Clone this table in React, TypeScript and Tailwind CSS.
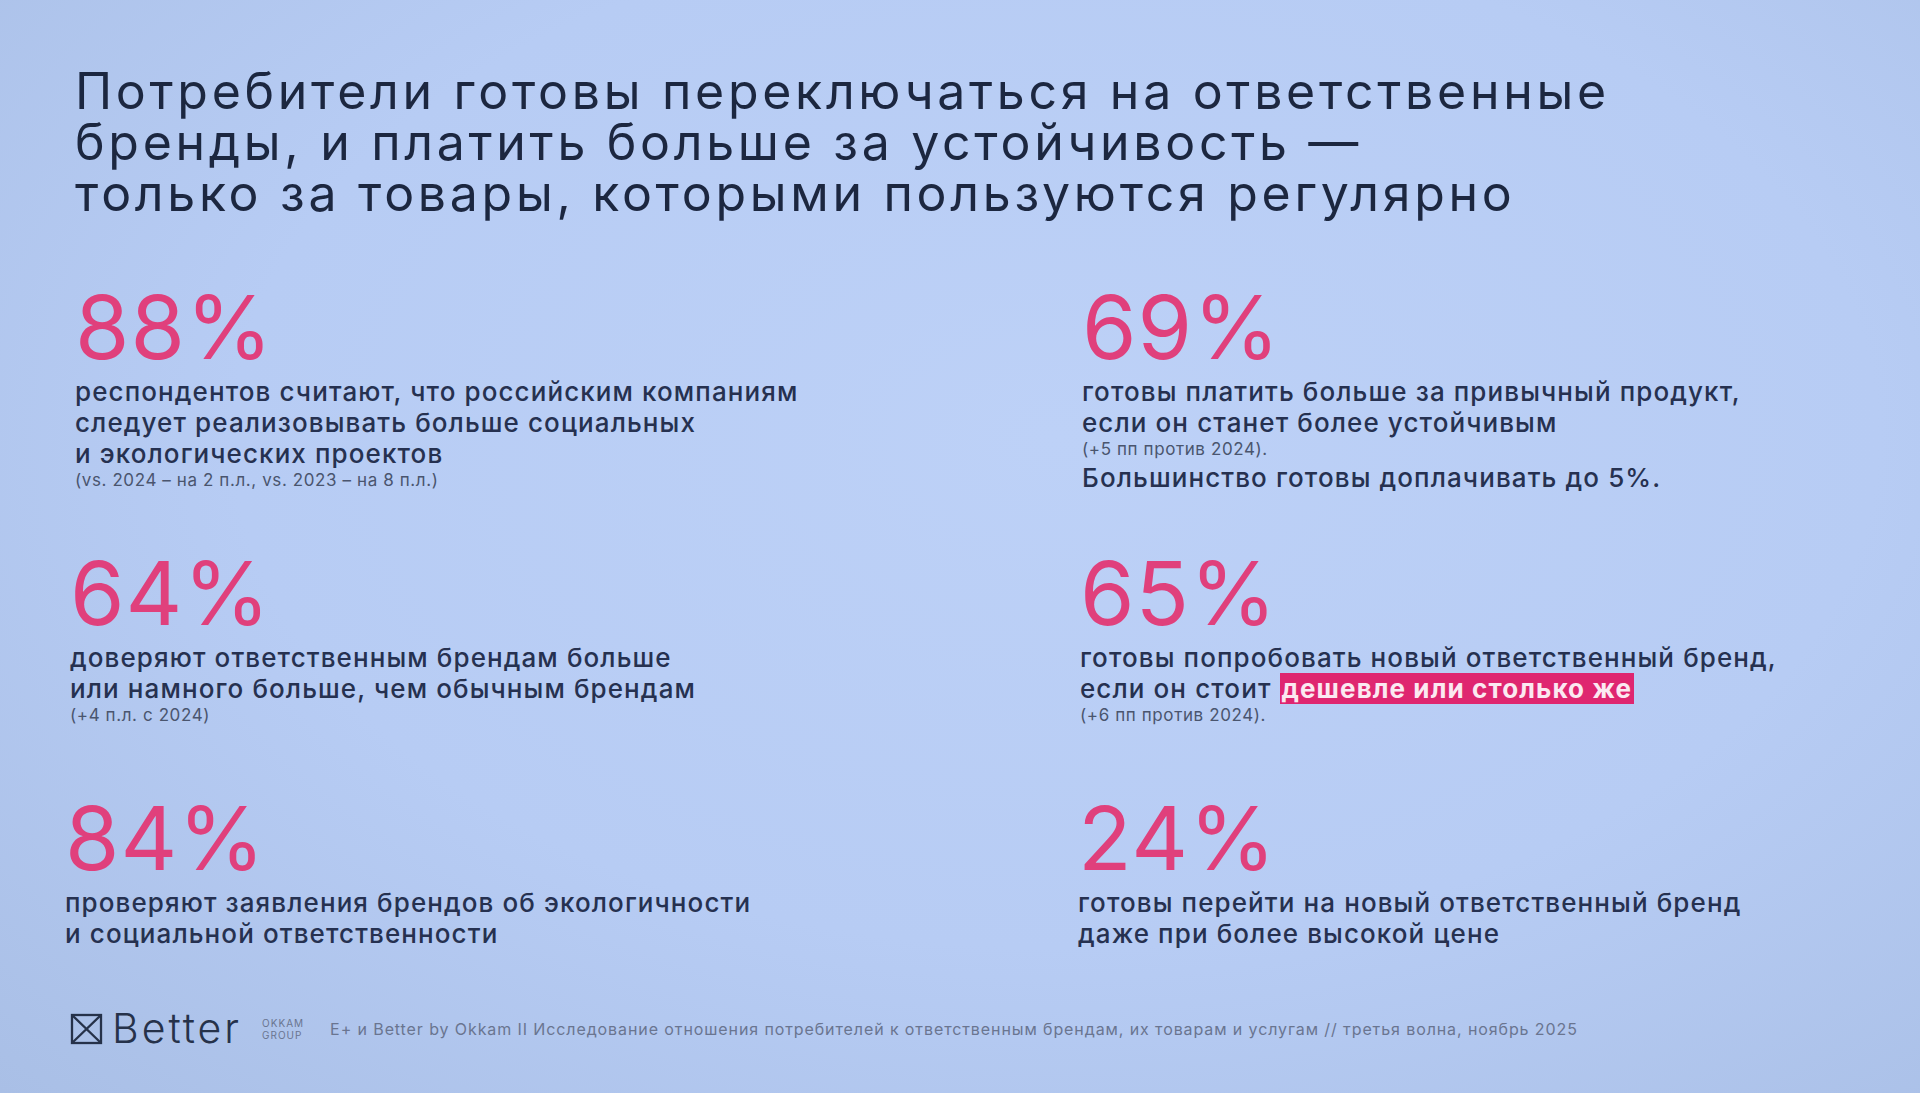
const font = { fontFamily: 'Inter, "Noto Sans", sans-serif' };

type Stat = {
  value: string;
  lines: React.ReactNode[];
  note?: string;
  extra?: string;
  shift: string;
};

type Row = { mt: string; items: [Stat, Stat] };

const rows: Row[] = [
  {
    mt: 'mt-[64px]',
    items: [
      {
        value: '88%',
        lines: [
          'респондентов считают, что российским компаниям',
          'следует реализовывать больше социальных',
          'и экологических проектов',
        ],
        note: '(vs. 2024 – на 2 п.л., vs. 2023 – на 8 п.л.)',
        shift: 'ml-[0px]',
      },
      {
        value: '69%',
        lines: ['готовы платить больше за привычный продукт,', 'если он станет более устойчивым'],
        note: '(+5 пп против 2024).',
        extra: 'Большинство готовы доплачивать до 5%.',
        shift: 'ml-[0px]',
      },
    ],
  },
  {
    mt: 'mt-[56px]',
    items: [
      {
        value: '64%',
        lines: ['доверяют ответственным брендам больше', 'или намного больше, чем обычным брендам'],
        note: '(+4 п.л. с 2024)',
        shift: '-ml-[5px]',
      },
      {
        value: '65%',
        lines: [
          'готовы попробовать новый ответственный бренд,',
          <>
            если он стоит{' '}
            <span className="bg-[#df2670] px-[2px] font-bold text-[#fbe9f1]">дешевле или столько же</span>
          </>,
        ],
        note: '(+6 пп против 2024).',
        shift: '-ml-[2px]',
      },
    ],
  },
  {
    mt: 'mt-[68px]',
    items: [
      {
        value: '84%',
        lines: ['проверяют заявления брендов об экологичности', 'и социальной ответственности'],
        shift: '-ml-[10px]',
      },
      {
        value: '24%',
        lines: ['готовы перейти на новый ответственный бренд', 'даже при более высокой цене'],
        shift: '-ml-[4px]',
      },
    ],
  },
];

function StatBlock({ s }: { s: Stat }) {
  return (
    <div className={`flex flex-col ${s.shift}`}>
      <div className="text-[88px] leading-none font-normal tracking-[1px] text-[#e0407c]">{s.value}</div>
      <div className="mt-[5px] text-[26px] leading-[31px] font-medium tracking-[1.1px] text-[#263150]">
        {s.lines.map((l, i) => (
          <div key={i}>{l}</div>
        ))}
      </div>
      {s.note && (
        <div className="text-[17px] leading-[22px] tracking-[0.6px] text-[#4a556e]">{s.note}</div>
      )}
      {s.extra && (
        <div className="mt-[2px] text-[26px] leading-[31px] font-medium tracking-[1.1px] text-[#263150]">
          {s.extra}
        </div>
      )}
    </div>
  );
}

function BetterLogo() {
  return (
    <div className="flex items-center gap-[9px] text-[#26324a]">
      <svg width="33" height="32" viewBox="0 0 33 32" fill="none" stroke="currentColor" strokeWidth="2.3">
        <rect x="2" y="2" width="29" height="28" />
        <path d="M2 2 L31 30 M31 2 L2 30" />
      </svg>
      <span className="text-[41px] leading-none font-light tracking-[3px]">Better</span>
    </div>
  );
}

export default function App() {
  return (
    <div
      style={font}
      className="relative h-[1093px] w-full overflow-hidden bg-[radial-gradient(ellipse_at_55%_40%,#bdd1f7_0%,#b7ccf4_55%,#a9bfe6_100%)]"
    >
      <div className="flex h-full flex-col pl-[75px] pr-[40px]">
        <h1 className="mt-[66px] text-[50px] leading-[51px] font-normal tracking-[3.7px] whitespace-nowrap text-[#1c2740]">
          Потребители готовы переключаться на ответственные
          <br />
          бренды, и платить больше за устойчивость —
          <br />
          только за товары, которыми пользуются регулярно
        </h1>

        {rows.map((r, i) => (
          <div key={i} className={`${r.mt} grid grid-cols-[1007px_1fr] items-start`}>
            <StatBlock s={r.items[0]} />
            <StatBlock s={r.items[1]} />
          </div>
        ))}

        <div className="mt-auto mb-[44px] -ml-[5px] flex items-center">
          <BetterLogo />
          <div className="ml-[20px] text-[10px] leading-[12px] tracking-[1px] text-[#6a7590]">
            <div>OKKAM</div>
            <div>GROUP</div>
          </div>
          <div className="ml-[26px] text-[16px] tracking-[0.9px] whitespace-nowrap text-[#6a7590]">
            E+ и Better by Okkam II Исследование отношения потребителей к ответственным брендам, их товарам и услугам // третья волна, ноябрь 2025
          </div>
        </div>
      </div>
    </div>
  );
}
